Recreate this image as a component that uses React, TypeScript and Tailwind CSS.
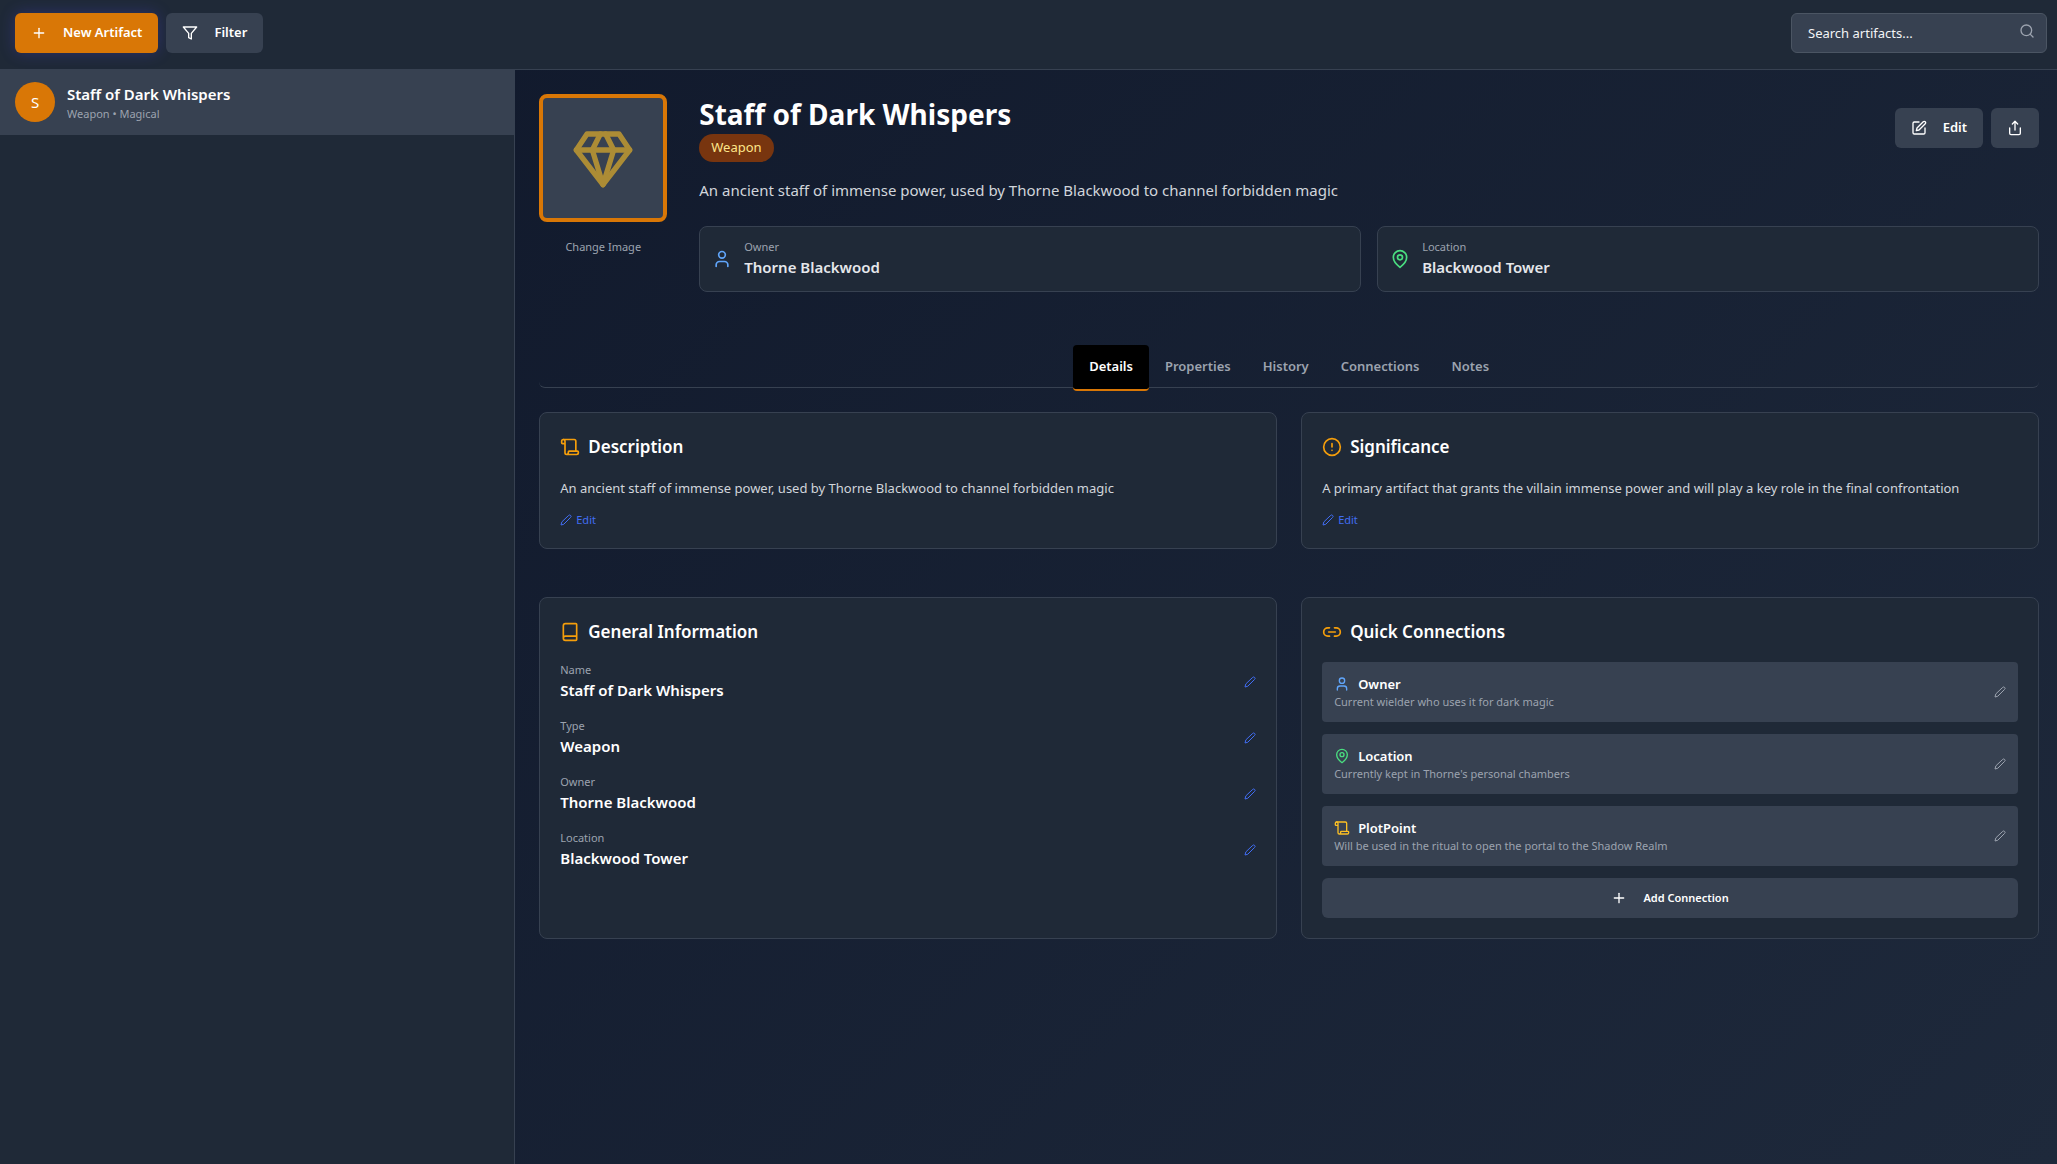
import React from "react";

type IconProps = { className?: string; children?: React.ReactNode };

function Svg({ className = "size-4", children }: IconProps) {
  return (
    <svg
      className={`shrink-0 ${className}`}
      viewBox="0 0 24 24"
      fill="none"
      stroke="currentColor"
      strokeWidth={2}
      strokeLinecap="round"
      strokeLinejoin="round"
      aria-hidden="true"
    >
      {children}
    </svg>
  );
}

const Plus = (p: IconProps) => (
  <Svg {...p}>
    <path d="M5 12h14" />
    <path d="M12 5v14" />
  </Svg>
);
const Funnel = (p: IconProps) => (
  <Svg {...p}>
    <polygon points="22 3 2 3 10 12.46 10 19 14 21 14 12.46 22 3" />
  </Svg>
);
const Search = (p: IconProps) => (
  <Svg {...p}>
    <circle cx="11" cy="11" r="8" />
    <path d="m21 21-4.3-4.3" />
  </Svg>
);
const SquarePen = (p: IconProps) => (
  <Svg {...p}>
    <path d="M12 3H5a2 2 0 0 0-2 2v14a2 2 0 0 0 2 2h14a2 2 0 0 0 2-2v-7" />
    <path d="M18.375 2.625a2.121 2.121 0 1 1 3 3L12 15l-4 1 1-4Z" />
  </Svg>
);
const Share = (p: IconProps) => (
  <Svg {...p}>
    <path d="M4 12v8a2 2 0 0 0 2 2h12a2 2 0 0 0 2-2v-8" />
    <polyline points="16 6 12 2 8 6" />
    <line x1="12" x2="12" y1="2" y2="15" />
  </Svg>
);
const Gem = (p: IconProps) => (
  <Svg {...p}>
    <path d="M6 3h12l4 6-10 13L2 9Z" />
    <path d="M11 3 8 9l4 13 4-13-3-6" />
    <path d="M2 9h20" />
  </Svg>
);
const User = (p: IconProps) => (
  <Svg {...p}>
    <path d="M19 21v-2a4 4 0 0 0-4-4H9a4 4 0 0 0-4 4v2" />
    <circle cx="12" cy="7" r="4" />
  </Svg>
);
const MapPin = (p: IconProps) => (
  <Svg {...p}>
    <path d="M20 10c0 6-8 12-8 12s-8-6-8-12a8 8 0 0 1 16 0Z" />
    <circle cx="12" cy="10" r="3" />
  </Svg>
);
const Scroll = (p: IconProps) => (
  <Svg {...p}>
    <path d="M19 17V5a2 2 0 0 0-2-2H4" />
    <path d="M8 21h12a2 2 0 0 0 2-2v-1a1 1 0 0 0-1-1H11a1 1 0 0 0-1 1v1a2 2 0 1 1-4 0V5a2 2 0 1 0-4 0v2a1 1 0 0 0 1 1h3" />
  </Svg>
);
const CircleAlert = (p: IconProps) => (
  <Svg {...p}>
    <circle cx="12" cy="12" r="10" />
    <line x1="12" x2="12" y1="8" y2="12" />
    <line x1="12" x2="12.01" y1="16" y2="16" />
  </Svg>
);
const Book = (p: IconProps) => (
  <Svg {...p}>
    <path d="M4 19.5v-15A2.5 2.5 0 0 1 6.5 2H19a1 1 0 0 1 1 1v18a1 1 0 0 1-1 1H6.5a1 1 0 0 1 0-5H20" />
  </Svg>
);
const Link = (p: IconProps) => (
  <Svg {...p}>
    <path d="M9 17H7A5 5 0 0 1 7 7h2" />
    <path d="M15 7h2a5 5 0 1 1 0 10h-2" />
    <line x1="8" x2="16" y1="12" y2="12" />
  </Svg>
);
const Pencil = (p: IconProps) => (
  <Svg {...p}>
    <path d="M17 3a2.85 2.83 0 1 1 4 4L7.5 20.5 2 22l1.5-5.5Z" />
  </Svg>
);

type IconType = (p: IconProps) => React.JSX.Element;

function ReferenceCard({ icon: Icon, tone, label, value }: { icon: IconType; tone: string; label: string; value: string }) {
  return (
    <div className="flex flex-1 items-center gap-3 rounded-lg border border-[#374151] bg-[#1f2937] p-3">
      <Icon className={`size-5 ${tone}`} />
      <div>
        <p className="text-[11px] leading-4 text-[#9ca3af]">{label}</p>
        <p className="text-[15px] leading-6 font-semibold text-[#e5e7eb]">{value}</p>
      </div>
    </div>
  );
}

function Panel({ icon: Icon, title, children }: { icon: IconType; title: string; children: React.ReactNode }) {
  return (
    <section className="rounded-lg border border-[#374151] bg-[#1f2937] p-5">
      <h2 className="mb-4 flex items-center gap-2 text-[17px] leading-7 font-semibold text-white">
        <Icon className="size-5 text-[#f59e0b]" />
        {title}
      </h2>
      {children}
    </section>
  );
}

function TextPanel({ icon, title, text }: { icon: IconType; title: string; text: string }) {
  return (
    <Panel icon={icon} title={title}>
      <p className="text-[13px] leading-[23px] text-[#d1d5db]">{text}</p>
      <button className="mt-3 flex items-center gap-1 text-[11px] leading-4 text-[#416df3]">
        <Pencil className="size-3" />
        Edit
      </button>
    </Panel>
  );
}

const tabs = ["Details", "Properties", "History", "Connections", "Notes"];

const fields = [
  ["Name", "Staff of Dark Whispers"],
  ["Type", "Weapon"],
  ["Owner", "Thorne Blackwood"],
  ["Location", "Blackwood Tower"],
];

const connections: { icon: IconType; tone: string; title: string; note: string }[] = [
  { icon: User, tone: "text-[#60a5fa]", title: "Owner", note: "Current wielder who uses it for dark magic" },
  { icon: MapPin, tone: "text-[#4ade80]", title: "Location", note: "Currently kept in Thorne's personal chambers" },
  { icon: Scroll, tone: "text-[#fbbf24]", title: "PlotPoint", note: "Will be used in the ritual to open the portal to the Shadow Realm" },
];

export default function App() {
  return (
    <div className="flex min-h-screen flex-col bg-linear-135 from-[#0f172a] to-[#1e293b] font-['Noto_Sans','Open_Sans',sans-serif] text-white">
      <header className="flex items-start justify-between border-b border-[#374151] bg-[#1f2937] pt-[13px] pr-[10px] pb-4 pl-[15px]">
        <div className="flex gap-2">
          <button className="flex h-10 items-center gap-4 rounded-md bg-[#d97706] px-4 text-[13px] font-semibold shadow-[0_0_15px_rgba(79,70,229,0.3)]">
            <Plus />
            New Artifact
          </button>
          <button className="flex h-10 items-center gap-4 rounded-md bg-[#374151] px-4 text-[13px] font-semibold">
            <Funnel />
            Filter
          </button>
        </div>
        <div className="relative w-64">
          <input
            type="text"
            aria-label="Search artifacts"
            placeholder="Search artifacts..."
            className="h-10 w-full rounded-md border border-[#4b5563] bg-[#374151] px-4 text-[13px] placeholder:text-[#f3f4f6]"
          />
          <Search className="absolute top-[10px] right-3 size-4 text-[#9ca3af]" />
        </div>
      </header>

      <div className="flex grow">
        <aside className="box-content w-1/4 shrink-0 border-r border-[#374151] bg-[#1f2937]">
          <button className="flex w-full items-center gap-3 border-b border-[#374151] bg-[#374151] py-3 pl-[15px] text-left">
            <span className="flex size-10 items-center justify-center rounded-full bg-[#d97706] text-[15px]">S</span>
            <span>
              <span className="block text-[15px] leading-6 font-semibold">Staff of Dark Whispers</span>
              <span className="block text-[11px] leading-4 text-[#9ca3af]">Weapon • Magical</span>
            </span>
          </button>
        </aside>

        <main className="min-w-0 flex-1 pt-6 pr-[18px] pb-6 pl-6">
          <div className="flex gap-8">
            <div className="flex w-32 shrink-0 flex-col items-center">
              <div className="flex size-32 items-center justify-center rounded-lg border-4 border-[#d97706] bg-[#374151]">
                <Gem className="size-16 text-[#fbbf24] opacity-60" />
              </div>
              <button className="mt-4 text-[11px] leading-[18px] text-[#9ca3af]">Change Image</button>
            </div>

            <div className="flex-1">
              <div className="flex items-center justify-between">
                <div>
                  <h1 className="text-[28px] leading-10 font-bold">Staff of Dark Whispers</h1>
                  <span className="inline-flex h-7 items-center rounded-full bg-[#78350f] px-3 align-top text-[13px] text-[#fde68a]">
                    Weapon
                  </span>
                </div>
                <div className="flex gap-2">
                  <button className="flex h-10 items-center gap-4 rounded-md bg-[#374151] px-4 text-[13px] font-semibold">
                    <SquarePen />
                    Edit
                  </button>
                  <button aria-label="Share" className="flex h-10 items-center rounded-md bg-[#374151] px-4">
                    <Share />
                  </button>
                </div>
              </div>
              <p className="mt-4 text-[15px] leading-6 text-[#d1d5db]">
                An ancient staff of immense power, used by Thorne Blackwood to channel forbidden magic
              </p>
              <div className="mt-6 flex gap-4">
                <ReferenceCard icon={User} tone="text-[#60a5fa]" label="Owner" value="Thorne Blackwood" />
                <ReferenceCard icon={MapPin} tone="text-[#4ade80]" label="Location" value="Blackwood Tower" />
              </div>
            </div>
          </div>

          <div role="tablist" className="mt-[53px] flex h-[43px] items-start justify-center rounded-md border-b border-[#374151]">
            {tabs.map((tab, i) => (
              <button
                key={tab}
                role="tab"
                aria-selected={i === 0}
                className={
                  i === 0
                    ? "h-[46px] shrink-0 rounded-sm border-b-2 border-[#d97706] bg-black px-4 text-[13px] font-semibold text-white"
                    : "h-[46px] shrink-0 border-b-2 border-transparent px-4 text-[13px] font-semibold text-[#9ca3af]"
                }
              >
                {tab}
              </button>
            ))}
          </div>

          <div className="mt-6 grid grid-cols-2 gap-x-6 gap-y-12">
            <TextPanel
              icon={Scroll}
              title="Description"
              text="An ancient staff of immense power, used by Thorne Blackwood to channel forbidden magic"
            />
            <TextPanel
              icon={CircleAlert}
              title="Significance"
              text="A primary artifact that grants the villain immense power and will play a key role in the final confrontation"
            />

            <Panel icon={Book} title="General Information">
              <dl className="flex flex-col gap-4">
                {fields.map(([label, value]) => (
                  <div key={label} className="flex items-center justify-between">
                    <div>
                      <dt className="text-[11px] leading-4 text-[#9ca3af]">{label}</dt>
                      <dd className="text-[15px] leading-6 font-semibold">{value}</dd>
                    </div>
                    <button aria-label={`Edit ${label}`} className="text-[#416df3]">
                      <Pencil className="size-3" />
                    </button>
                  </div>
                ))}
              </dl>
            </Panel>

            <Panel icon={Link} title="Quick Connections">
              <ul className="flex flex-col gap-3">
                {connections.map(({ icon: Icon, tone, title, note }) => (
                  <li key={title} className="flex items-center justify-between rounded-sm bg-[#374151] p-3">
                    <div>
                      <p className="flex items-center gap-2 text-[13px] leading-5 font-semibold">
                        <Icon className={`size-4 ${tone}`} />
                        {title}
                      </p>
                      <p className="text-[11px] leading-4 text-[#9ca3af]">{note}</p>
                    </div>
                    <button aria-label={`Edit ${title} connection`} className="text-[#9ca3af]">
                      <Pencil className="size-3" />
                    </button>
                  </li>
                ))}
              </ul>
              <button className="mt-3 flex h-10 w-full items-center justify-center gap-4 rounded-md bg-[#374151] text-[11px] font-semibold">
                <Plus />
                Add Connection
              </button>
            </Panel>
          </div>
        </main>
      </div>
    </div>
  );
}
